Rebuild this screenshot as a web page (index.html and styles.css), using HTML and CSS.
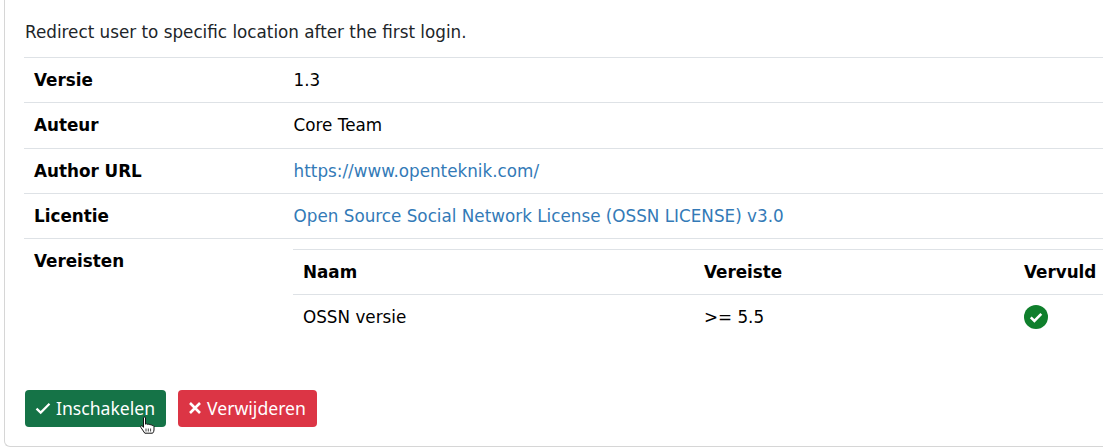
FILE: index.html
```html
<!DOCTYPE html>
<html lang="nl">
<head>
<meta charset="utf-8">
<title>Component</title>
<link rel="stylesheet" href="styles.css">
</head>
<body>
<div class="card">
  <p class="desc">Redirect user to specific location after the first login.</p>
  <table class="info">
    <tr><th>Versie</th><td>1.3</td></tr>
    <tr><th>Auteur</th><td>Core Team</td></tr>
    <tr><th>Author URL</th><td><a href="#">https://www.openteknik.com/</a></td></tr>
    <tr><th>Licentie</th><td><a href="#">Open Source Social Network License (OSSN LICENSE) v3.0</a></td></tr>
    <tr>
      <th>Vereisten</th>
      <td class="nested">
        <table class="req">
          <tr><th class="c1">Naam</th><th class="c2">Vereiste</th><th class="c3">Vervuld</th></tr>
          <tr>
            <td>OSSN versie</td><td>&gt;= 5.5</td>
            <td><svg class="ok" viewBox="0 0 24 24" width="24" height="24"><circle cx="12" cy="12" r="12" fill="#0f7f2c"/><path d="M6.800 12.400l3.600 3.500 6.900-7" fill="none" stroke="#fff" stroke-width="2.600"/></svg></td>
          </tr>
        </table>
      </td>
    </tr>
  </table>
  <div class="actions">
    <a class="btn green" href="#"><svg viewBox="0 0 16 16" width="16" height="16"><path d="M1.500 8.600l4.200 4L14.500 3.800" fill="none" stroke="#fff" stroke-width="2.200"/></svg>Inschakelen<svg class="cursor" viewBox="0 0 16 18" width="16" height="18"><path d="M3.500 2c0-1.400 2-1.400 2 0v6.200c.8-.6 2-.5 2.200.3.800-.5 2-.4 2.200.4.800-.4 2.100-.2 2.300.7.600-.2 1.800 0 1.800 1v3.400c0 1.300-.6 2.200-1.400 3.200H4.800L.8 11.300c-.7-1 .5-2.100 1.400-1.300l1.300 1.300z" fill="#fff" stroke="#111" stroke-width="1"/><path d="M6 12.500v3M8.300 12.500v3M10.600 12.500v3" stroke="#111" stroke-width=".8"/></svg></a>
    <a class="btn red" href="#"><svg viewBox="0 0 16 16" width="16" height="16"><path d="M3 3l10 10M13 3L3 13" fill="none" stroke="#fff" stroke-width="2.600"/></svg>Verwijderen</a>
  </div>
</div>
</body>
</html>
```
FILE: styles.css
```css
html, body { margin: 0; padding: 0; background: #fff; }
body {
  width: 1103px;
  height: 447px;
  overflow: hidden;
  font-family: "DejaVu Sans", sans-serif;
  font-size: 16.8px;
  color: #000;
}
.card {
  box-sizing: border-box;
  width: 1099px;
  height: 447px;
  margin-left: 4px;
  padding: 20px 0 19px 19px;
  overflow: hidden;
  border: 1px solid #d6d6d6;
  border-top: 0;
  border-right: 0;
  border-radius: 0 0 0 6px;
  background: #fff;
}
.desc { margin: 0 0 0 1px; height: 37.2px; line-height: 24px; color: #212529; }
.info { border-collapse: collapse; width: 1150px; table-layout: fixed; }
.info > tbody > tr > th, .info > tbody > tr > td {
  padding: 10px 10px 9px;
  line-height: 25.2px;
  border-top: 1px solid #dee2e6;
  text-align: left;
  vertical-align: top;
}
.info > tbody > tr > th { width: 239.6px; font-weight: 700; }
.info a { color: #337ab7; text-decoration: none; }
.info > tbody > tr > td.nested { padding: 10px 0 0 9.4px; }
.req { border-collapse: collapse; width: 840px; table-layout: fixed; }
.req th, .req td { padding: 10px 10px 9px; line-height: 25.2px; text-align: left; vertical-align: top; }
.req th { border-top: 1px solid #dee2e6; border-bottom: 1px solid #dee2e6; font-weight: 700; }
.req .c1 { width: 381px; }
.req .c2 { width: 300px; }
.ok { display: block; }
.actions { display: flex; gap: 12px; margin-top: 51px; padding-left: 1px; }
.btn {
  position: relative;
  display: flex;
  align-items: center;
  gap: 5px;
  box-sizing: border-box;
  height: 37px;
  padding: 0 10px 2px;
  border-radius: 4px;
  font-family: "Noto Sans", sans-serif;
  font-size: 17.6px;
  color: #fff;
  text-decoration: none;
}
.green { background: #157347; padding-right: 11px; }
.red { background: #dc3545; gap: 4px; padding-right: 11px; padding-left: 9px; }
.cursor { position: absolute; left: 115px; top: 26px; }
```
